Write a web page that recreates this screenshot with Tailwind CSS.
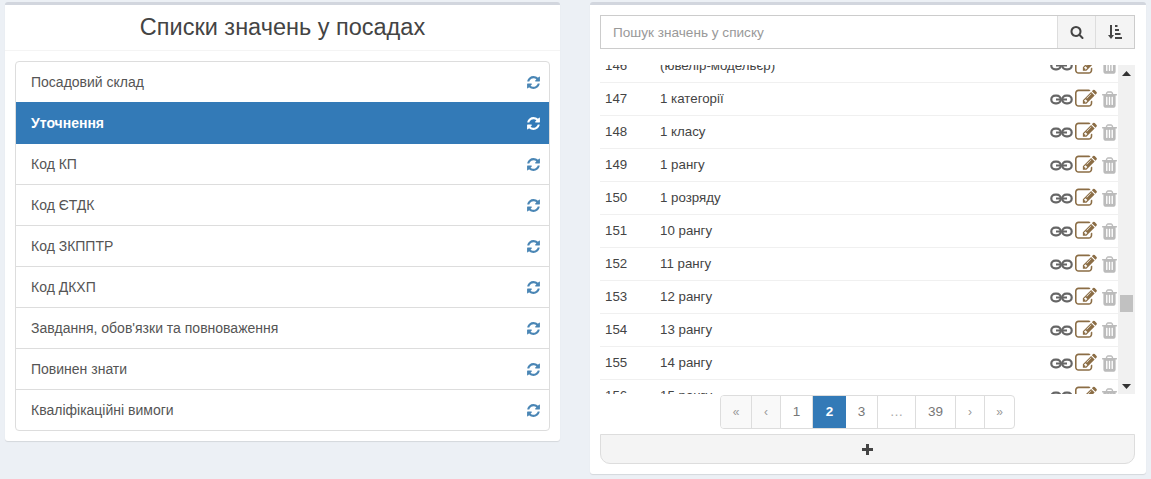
<!DOCTYPE html>
<html lang="uk">
<head>
<meta charset="utf-8">
<script src="https://cdn.jsdelivr.net/npm/@tailwindcss/browser@4"></script>
<title>Списки значень</title>
</head>
<body class="bg-[#ecf0f5] font-['Liberation_Sans',Arial,sans-serif] text-[14px] text-[#333] overflow-hidden">
<svg width="0" height="0" class="absolute">
  <defs>
    <symbol id="refresh" viewBox="0 0 1792 1792"><path fill="currentColor" d="M1639 1056q0 5-1 7-64 268-268 434.5t-478 166.5q-146 0-282.5-55t-243.5-157l-129 129q-19 19-45 19t-45-19-19-45v-448q0-26 19-45t45-19h448q26 0 45 19t19 45-19 45l-137 137q71 66 161 102t187 36q134 0 250-65t186-179q11-17 53-117 8-23 30-23h192q13 0 22.5 9.5t9.5 22.5zm25-800v448q0 26-19 45t-45 19h-448q-26 0-45-19t-19-45 19-45l138-138q-148-137-349-137-134 0-250 65t-186 179q-11 17-53 117-8 23-30 23h-199q-13 0-22.5-9.5t-9.5-22.5v-7q65-268 270-434.5t480-166.5q146 0 284 55.5t245 156.5l130-129q19-19 45-19t45 19 19 45z"/></symbol>
    <symbol id="search" viewBox="0 0 1792 1792"><path fill="currentColor" d="M1216 832q0-185-131.5-316.5t-316.5-131.5-316.5 131.5-131.5 316.5 131.5 316.5 316.5 131.5 316.5-131.5 131.5-316.5zm512 832q0 52-38 90t-90 38q-54 0-90-38l-343-342q-179 124-399 124-143 0-273.5-55.5t-225-150-150-225-55.5-273.5 55.5-273.5 150-225 225-150 273.5-55.5 273.5 55.5 225 150 150 225 55.5 273.5q0 220-124 399l343 343q37 37 37 90z"/></symbol>
    <symbol id="edit" viewBox="0 0 1792 1792"><path fill="currentColor" d="M888 1184l116-116-152-152-116 116v56h96v96h56zm440-720q-16-16-33 1l-350 350q-17 17-1 33t33-1l350-350q17-17 1-33zm80 594v190q0 119-84.5 203.5t-203.5 84.5h-832q-119 0-203.5-84.5t-84.5-203.5v-832q0-119 84.5-203.5t203.5-84.5h832q63 0 117 25 15 7 18 23 3 17-9 29l-49 49q-14 14-32 8-23-6-45-6h-832q-66 0-113 47t-47 113v832q0 66 47 113t113 47h832q66 0 113-47t47-113v-126q0-13 9-22l64-64q15-15 35-7t20 29zm-96-738l288 288-672 672h-288v-288zm444 132l-92 92-288-288 92-92q28-28 68-28t68 28l152 152q28 28 28 68t-28 68z"/></symbol>
    <symbol id="trash" viewBox="0 0 1792 1792"><path fill="currentColor" d="M704 1376v-704q0-14-9-23t-23-9h-64q-14 0-23 9t-9 23v704q0 14 9 23t23 9h64q14 0 23-9t9-23zm256 0v-704q0-14-9-23t-23-9h-64q-14 0-23 9t-9 23v704q0 14 9 23t23 9h64q14 0 23-9t9-23zm256 0v-704q0-14-9-23t-23-9h-64q-14 0-23 9t-9 23v704q0 14 9 23t23 9h64q14 0 23-9t9-23zm-544-992h448l-48-117q-7-9-17-11h-317q-10 2-17 11zm928 32v64q0 14-9 23t-23 9h-96v948q0 83-47 143.5t-113 60.5h-832q-66 0-113-58.5t-47-141.5v-952h-96q-14 0-23-9t-9-23v-64q0-14 9-23t23-9h309l70-167q15-37 54-63t79-26h320q40 0 79 26t54 63l70 167h309q14 0 23 9t9 23z"/></symbol>
    <symbol id="chain" viewBox="0 0 23 11"><g fill="none" stroke="currentColor" stroke-width="2.2"><rect x="1.3" y="1.6" width="9.4" height="7.8" rx="3.9"/><rect x="12.3" y="1.6" width="9.4" height="7.8" rx="3.9"/></g><rect x="6" y="4.5" width="11" height="2" fill="currentColor"/></symbol>
  </defs>
</svg>

<div class="flex items-start gap-[30px] pl-[5px] pt-[2px] h-[479px]">
  <!-- left panel -->
  <section class="w-[555px] h-[439px] bg-white border-t-[3px] border-[#d2d6de] rounded-[3px] shadow-[0_1px_1px_rgba(0,0,0,0.1)]">
    <h1 class="h-[46px] border-b border-[#f4f4f4] text-center text-[23.5px] leading-[44px] text-[#444]">Списки значень у посадах</h1>
    <div class="mx-[10px] mt-[10px] w-[535px] border border-[#ddd] rounded-[4px] overflow-hidden text-[#555]">
      <div class="h-[40px] flex items-center justify-between pl-[15px] pr-[8px]">Посадовий склад<svg class="w-[15px] h-[15px] text-[#4a86b5]"><use href="#refresh"/></svg></div>
      <div class="h-[42px] flex items-center justify-between pl-[15px] pr-[8px] bg-[#337ab7] text-white font-bold">Уточнення<svg class="w-[15px] h-[15px] text-white"><use href="#refresh"/></svg></div>
      <div class="h-[41px] flex items-center justify-between pl-[15px] pr-[8px] border-b border-[#ddd]">Код КП<svg class="w-[15px] h-[15px] text-[#4a86b5]"><use href="#refresh"/></svg></div>
      <div class="h-[41px] flex items-center justify-between pl-[15px] pr-[8px] border-b border-[#ddd]">Код ЄТДК<svg class="w-[15px] h-[15px] text-[#4a86b5]"><use href="#refresh"/></svg></div>
      <div class="h-[41px] flex items-center justify-between pl-[15px] pr-[8px] border-b border-[#ddd]">Код ЗКППТР<svg class="w-[15px] h-[15px] text-[#4a86b5]"><use href="#refresh"/></svg></div>
      <div class="h-[41px] flex items-center justify-between pl-[15px] pr-[8px] border-b border-[#ddd]">Код ДКХП<svg class="w-[15px] h-[15px] text-[#4a86b5]"><use href="#refresh"/></svg></div>
      <div class="h-[41px] flex items-center justify-between pl-[15px] pr-[8px] border-b border-[#ddd]">Завдання, обов'язки та повноваження<svg class="w-[15px] h-[15px] text-[#4a86b5]"><use href="#refresh"/></svg></div>
      <div class="h-[41px] flex items-center justify-between pl-[15px] pr-[8px] border-b border-[#ddd]">Повинен знати<svg class="w-[15px] h-[15px] text-[#4a86b5]"><use href="#refresh"/></svg></div>
      <div class="h-[40px] flex items-center justify-between pl-[15px] pr-[8px]">Кваліфікаційні вимоги<svg class="w-[15px] h-[15px] text-[#4a86b5]"><use href="#refresh"/></svg></div>
    </div>
  </section>

  <!-- right panel -->
  <section class="w-[556px] h-[472px] bg-white border-t-[3px] border-[#d2d6de] rounded-[3px] shadow-[0_1px_1px_rgba(0,0,0,0.1)] px-[10px] pt-[10px]">
    <div class="flex h-[34px] w-[535px] border border-[#ccc]">
      <div class="flex-1 pl-[12px] leading-[33px] text-[13.6px] text-[#999]">Пошук значень у списку</div>
      <div class="w-[38px] flex items-center justify-center bg-[#f4f4f4] border-l border-[#ddd]"><svg class="w-[14px] h-[14px] text-[#444]"><use href="#search"/></svg></div>
      <div class="w-[39px] flex items-center justify-center bg-[#f4f4f4] border-l border-[#ddd]">
        <svg width="14" height="14" viewBox="0 0 14 14" class="text-[#444]" fill="currentColor"><path d="M2 0h2v10h2L3 14 0 10h2z"/><rect x="7" y="0" width="2.5" height="2"/><rect x="7" y="4" width="4" height="2"/><rect x="7" y="8" width="5.5" height="2"/><rect x="7" y="12" width="7" height="2"/></svg>
      </div>
    </div>

    <div class="flex mt-[16px] w-[535px] h-[329px] overflow-hidden">
      <div class="flex-1 -mt-[16px] text-[13.3px] text-[#444]">
        <div class="h-[33px] flex items-center"><span class="w-[60px] pl-[5px]">146</span><span class="flex-1">(ювелір-модельєр)</span><svg class="w-[23px] h-[11px] text-[#666]"><use href="#chain"/></svg><svg class="w-[22px] h-[22px] ml-[2px] text-[#8b6d45]"><use href="#edit"/></svg><svg class="w-[19px] h-[19px] ml-[3px] -mr-[1px] text-[#bbb]"><use href="#trash"/></svg></div>
        <div class="h-[33px] flex items-center border-t border-[#f0f0f0]"><span class="w-[60px] pl-[5px] pb-[1px]">147</span><span class="flex-1 pb-[1px]">1 категорії</span><svg class="w-[23px] h-[11px] text-[#666]"><use href="#chain"/></svg><svg class="w-[22px] h-[22px] ml-[2px] text-[#8b6d45]"><use href="#edit"/></svg><svg class="w-[19px] h-[19px] ml-[3px] -mr-[1px] text-[#bbb]"><use href="#trash"/></svg></div>
        <div class="h-[33px] flex items-center border-t border-[#f0f0f0]"><span class="w-[60px] pl-[5px] pb-[1px]">148</span><span class="flex-1 pb-[1px]">1 класу</span><svg class="w-[23px] h-[11px] text-[#666]"><use href="#chain"/></svg><svg class="w-[22px] h-[22px] ml-[2px] text-[#8b6d45]"><use href="#edit"/></svg><svg class="w-[19px] h-[19px] ml-[3px] -mr-[1px] text-[#bbb]"><use href="#trash"/></svg></div>
        <div class="h-[33px] flex items-center border-t border-[#f0f0f0]"><span class="w-[60px] pl-[5px] pb-[1px]">149</span><span class="flex-1 pb-[1px]">1 рангу</span><svg class="w-[23px] h-[11px] text-[#666]"><use href="#chain"/></svg><svg class="w-[22px] h-[22px] ml-[2px] text-[#8b6d45]"><use href="#edit"/></svg><svg class="w-[19px] h-[19px] ml-[3px] -mr-[1px] text-[#bbb]"><use href="#trash"/></svg></div>
        <div class="h-[33px] flex items-center border-t border-[#f0f0f0]"><span class="w-[60px] pl-[5px] pb-[1px]">150</span><span class="flex-1 pb-[1px]">1 розряду</span><svg class="w-[23px] h-[11px] text-[#666]"><use href="#chain"/></svg><svg class="w-[22px] h-[22px] ml-[2px] text-[#8b6d45]"><use href="#edit"/></svg><svg class="w-[19px] h-[19px] ml-[3px] -mr-[1px] text-[#bbb]"><use href="#trash"/></svg></div>
        <div class="h-[33px] flex items-center border-t border-[#f0f0f0]"><span class="w-[60px] pl-[5px] pb-[1px]">151</span><span class="flex-1 pb-[1px]">10 рангу</span><svg class="w-[23px] h-[11px] text-[#666]"><use href="#chain"/></svg><svg class="w-[22px] h-[22px] ml-[2px] text-[#8b6d45]"><use href="#edit"/></svg><svg class="w-[19px] h-[19px] ml-[3px] -mr-[1px] text-[#bbb]"><use href="#trash"/></svg></div>
        <div class="h-[33px] flex items-center border-t border-[#f0f0f0]"><span class="w-[60px] pl-[5px] pb-[1px]">152</span><span class="flex-1 pb-[1px]">11 рангу</span><svg class="w-[23px] h-[11px] text-[#666]"><use href="#chain"/></svg><svg class="w-[22px] h-[22px] ml-[2px] text-[#8b6d45]"><use href="#edit"/></svg><svg class="w-[19px] h-[19px] ml-[3px] -mr-[1px] text-[#bbb]"><use href="#trash"/></svg></div>
        <div class="h-[33px] flex items-center border-t border-[#f0f0f0]"><span class="w-[60px] pl-[5px] pb-[1px]">153</span><span class="flex-1 pb-[1px]">12 рангу</span><svg class="w-[23px] h-[11px] text-[#666]"><use href="#chain"/></svg><svg class="w-[22px] h-[22px] ml-[2px] text-[#8b6d45]"><use href="#edit"/></svg><svg class="w-[19px] h-[19px] ml-[3px] -mr-[1px] text-[#bbb]"><use href="#trash"/></svg></div>
        <div class="h-[33px] flex items-center border-t border-[#f0f0f0]"><span class="w-[60px] pl-[5px] pb-[1px]">154</span><span class="flex-1 pb-[1px]">13 рангу</span><svg class="w-[23px] h-[11px] text-[#666]"><use href="#chain"/></svg><svg class="w-[22px] h-[22px] ml-[2px] text-[#8b6d45]"><use href="#edit"/></svg><svg class="w-[19px] h-[19px] ml-[3px] -mr-[1px] text-[#bbb]"><use href="#trash"/></svg></div>
        <div class="h-[33px] flex items-center border-t border-[#f0f0f0]"><span class="w-[60px] pl-[5px] pb-[1px]">155</span><span class="flex-1 pb-[1px]">14 рангу</span><svg class="w-[23px] h-[11px] text-[#666]"><use href="#chain"/></svg><svg class="w-[22px] h-[22px] ml-[2px] text-[#8b6d45]"><use href="#edit"/></svg><svg class="w-[19px] h-[19px] ml-[3px] -mr-[1px] text-[#bbb]"><use href="#trash"/></svg></div>
        <div class="h-[33px] flex items-center border-t border-[#f0f0f0]"><span class="w-[60px] pl-[5px] pb-[1px]">156</span><span class="flex-1 pb-[1px]">15 рангу</span><svg class="w-[23px] h-[11px] text-[#666]"><use href="#chain"/></svg><svg class="w-[22px] h-[22px] ml-[2px] text-[#8b6d45]"><use href="#edit"/></svg><svg class="w-[19px] h-[19px] ml-[3px] -mr-[1px] text-[#bbb]"><use href="#trash"/></svg></div>
      </div>
      <div class="relative w-[17px] bg-[#f1f1f1]">
        <svg class="absolute left-[4px] top-[6px]" width="9" height="5" viewBox="0 0 9 5"><path d="M4.5 0L9 5H0z" fill="#333"/></svg>
        <div class="absolute left-[2px] top-[230px] w-[13px] h-[17px] bg-[#c1c1c1]"></div>
        <svg class="absolute left-[4px] bottom-[5px]" width="9" height="5" viewBox="0 0 9 5"><path d="M0 0h9L4.5 5z" fill="#333"/></svg>
      </div>
    </div>

    <nav class="flex justify-center h-[34px] mt-[1px]">
      <div class="flex h-[34px] -ml-[1px] border border-[#ddd] rounded-[4px] overflow-hidden text-[13.5px] text-[#777]">
        <span class="w-[31px] flex items-center justify-center bg-[#f9f9f9] border-r border-[#ddd] text-[#999] text-[12px]">«</span>
        <span class="w-[29px] flex items-center justify-center bg-[#f9f9f9] border-r border-[#ddd] text-[#999] text-[12px]">‹</span>
        <span class="w-[32px] flex items-center justify-center border-r border-[#ddd]">1</span>
        <span class="w-[33px] flex items-center justify-center bg-[#337ab7] text-white font-bold">2</span>
        <span class="w-[32px] flex items-center justify-center border-r border-[#ddd]">3</span>
        <span class="w-[38px] flex items-center justify-center border-r border-[#ddd] text-[#aaa]">…</span>
        <span class="w-[40px] flex items-center justify-center border-r border-[#ddd]">39</span>
        <span class="w-[29px] flex items-center justify-center border-r border-[#ddd] text-[#999] text-[12px]">›</span>
        <span class="w-[29px] flex items-center justify-center text-[#999] text-[12px]">»</span>
      </div>
    </nav>

    <div class="mt-[5px] w-[535px] h-[30px] flex items-center justify-center bg-[#f4f4f4] border border-[#ddd] rounded-b-[10px]">
      <svg width="11" height="11" viewBox="0 0 11 11" fill="#444"><path d="M4 0h3v4h4v3H7v4H4V7H0V4h4z"/></svg>
    </div>
  </section>
</div>
</body>
</html>
